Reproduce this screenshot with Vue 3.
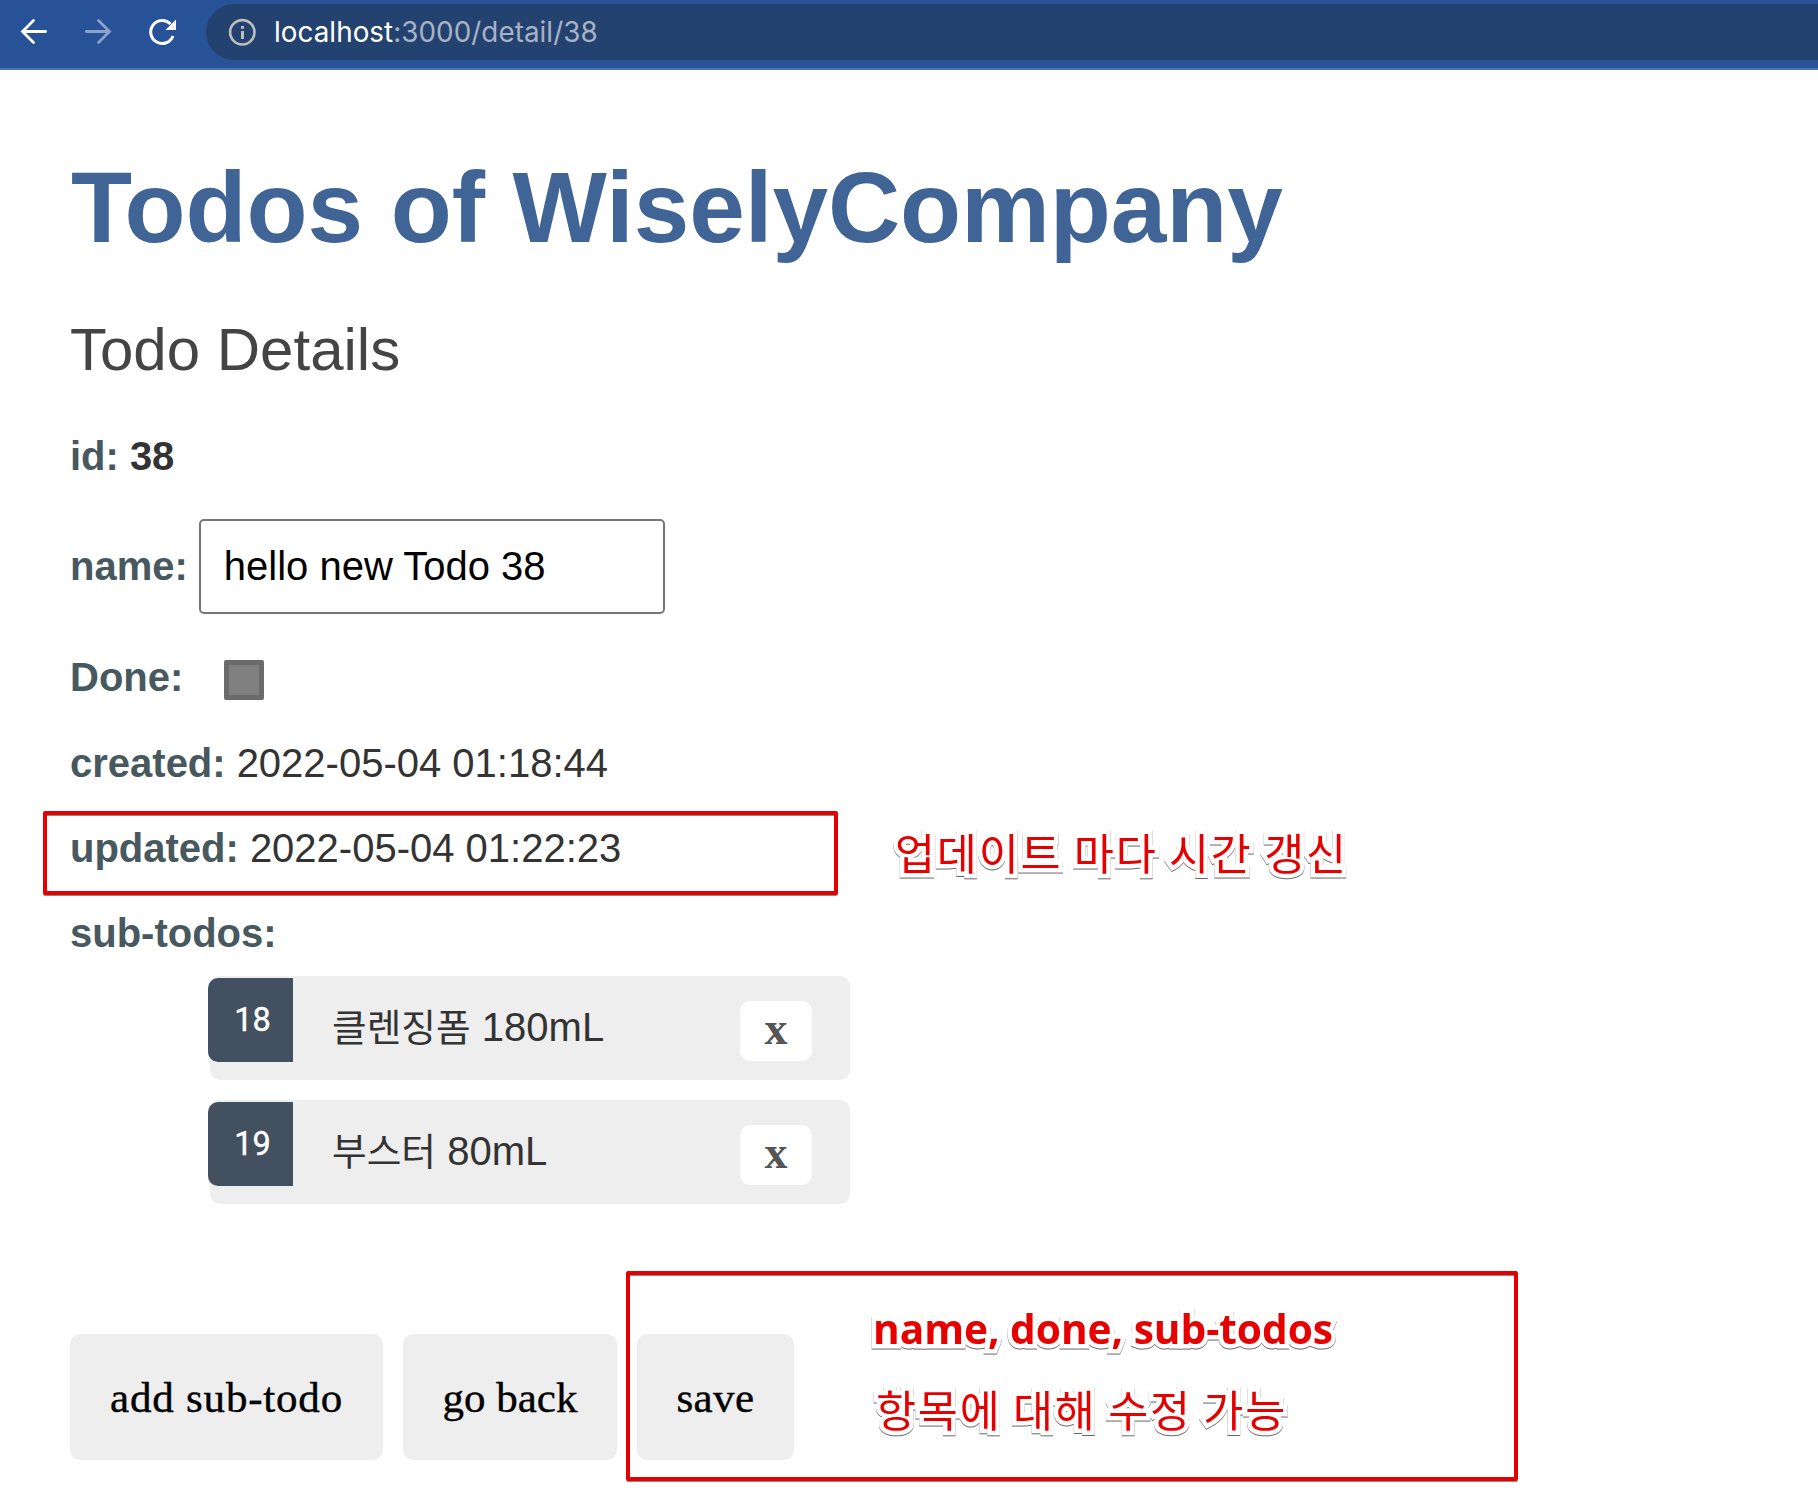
<script setup>
import { ref } from 'vue'

const todo = ref({
  id: 38,
  name: 'hello new Todo 38',
  created: '2022-05-04 01:18:44',
  updated: '2022-05-04 01:22:23',
})

const subTodos = ref([
  { id: 18, label: '클렌징폼', amount: '180mL' },
  { id: 19, label: '부스터', amount: '80mL' },
])
</script>

<template>
  <div class="page">
    <header class="toolbar">
      <svg class="nav" viewBox="0 0 28 28" width="28" height="28" fill="none" stroke="#fff" stroke-width="2.8" stroke-linecap="round">
        <path d="M25.6 13.500H3M13.500 2.500L2.500 13.500L13.500 24.500" />
      </svg>
      <svg class="nav" viewBox="0 0 28 28" width="28" height="28" fill="none" stroke="#8ba2cb" stroke-width="2.8" stroke-linecap="round">
        <path d="M2.400 13.500H25M14.500 2.500L25.500 13.500L14.500 24.500" />
      </svg>
      <svg class="nav" viewBox="0 0 28 28" width="28" height="28">
        <path d="M25 18A11.500 11.500 0 1 1 22.500 6" fill="none" stroke="#fff" stroke-width="3" />
        <path d="M28 1.500V12H17.500Z" fill="#fff" />
      </svg>
      <div class="address">
        <svg viewBox="0 0 28 28" width="28" height="28" fill="none" stroke="#bdbdbd">
          <circle cx="14.300" cy="14.300" r="12.200" stroke-width="2.600" />
          <path d="M14.500 13V21M14.500 8V10.700" stroke-width="3" />
        </svg>
        <span class="url"><b>localhost</b>:3000/detail/38</span>
      </div>
    </header>

    <main>
      <h1>Todos of WiselyCompany</h1>
      <h2>Todo Details</h2>

      <div class="row id"><label>id:</label><strong>{{ todo.id }}</strong></div>
      <div class="row name"><label>name:</label><input v-model="todo.name" type="text" /></div>
      <div class="row done"><label>Done:</label><span class="check"></span></div>
      <div class="row"><label>created:</label><span>{{ todo.created }}</span></div>
      <div class="row"><label>updated:</label><span>{{ todo.updated }}</span></div>
      <div class="row"><label>sub-todos:</label></div>

      <ul>
        <li v-for="item in subTodos" :key="item.id">
          <span class="badge">{{ item.id }}</span>
          <span class="text"><span class="ko">{{ item.label }}</span> {{ item.amount }}</span>
          <button class="remove">x</button>
        </li>
      </ul>

      <div class="actions">
        <button class="add">add sub-todo</button>
        <button class="back">go back</button>
        <button class="save">save</button>
      </div>
    </main>

    <div class="frame frame-updated"></div>
    <div class="frame frame-save"></div>
    <div class="note note-updated">업데이트 마다 시간 갱신</div>
    <div class="note note-fields">name, done, sub-todos</div>
    <div class="note note-edit">항목에 대해 수정 가능</div>
  </div>
</template>

<style>
body {
  margin: 0;
  background: #fff;
}
</style>

<style scoped>
.page {
  position: relative;
  width: 1818px;
  height: 1500px;
  overflow: hidden;
  background: #fff;
  font-family: "Liberation Sans", "Noto Sans CJK KR", sans-serif;
  color: #333;
}
* {
  box-sizing: border-box;
}
.toolbar {
  display: flex;
  height: 70px;
  padding: 4px 0 0 20px;
  background: #275297;
  border-bottom: 2px solid #4a74b1;
}
.nav {
  flex: none;
  margin: 14px 36px 0 0;
}
.nav:nth-child(3) {
  margin-right: 30px;
}
.address {
  flex: 1;
  display: flex;
  align-items: center;
  height: 56px;
  padding-left: 22px;
  border-radius: 28px 0 0 28px;
  background: #24426f;
}
.url {
  margin-left: 18px;
  font: 27.8px/56px Inter, sans-serif;
  letter-spacing: 0.05px;
  color: #a7b3c5;
}
.url b {
  font-weight: 400;
  color: #fff;
}
main {
  padding: 77px 70px 0;
}
h1 {
  margin: 0 0 0 1px;
  font-size: 100px;
  line-height: 120px;
  letter-spacing: -0.1px;
  font-weight: 700;
  color: #406495;
  white-space: nowrap;
}
h2 {
  margin: 48px 0 31px;
  font-size: 60px;
  line-height: 70px;
  font-weight: 400;
  color: #444;
}
.row {
  display: flex;
  align-items: center;
  height: 85px;
  font-size: 40px;
}
.row label {
  margin-right: 11px;
  font-weight: 700;
  color: #47585f;
}
.row.id {
  height: 80px;
}
.row.name {
  height: 95px;
  margin: 23px 0;
}
.row.done {
  height: 80px;
  margin-bottom: 4px;
}
input {
  width: 466px;
  height: 95px;
  padding: 0 23px;
  border: 2px solid #767676;
  border-radius: 5px;
  font: 40px "Liberation Sans", sans-serif;
  color: #000;
}
.check {
  width: 40px;
  height: 40px;
  margin: 6px 0 0 30px;
  border: 5px solid #6a6a6a;
  border-radius: 2px;
  background: #808080;
}
ul {
  margin: 0;
  padding: 0 0 0 140px;
  list-style: none;
}
li {
  display: flex;
  align-items: flex-start;
  width: 640px;
  height: 104px;
  margin-bottom: 20px;
  border-radius: 10px;
  background: #eee;
}
.badge {
  width: 85px;
  height: 84px;
  margin: 2px 0 0 -2px;
  padding-left: 4px;
  border-radius: 10px 0 0 10px;
  background: #435060;
  color: #fff;
  font-family: Roboto, sans-serif;
  font-size: 32.5px;
  line-height: 85px;
  text-align: center;
  -webkit-text-stroke: 0.4px #fff;
}
.text {
  flex: 1;
  padding-left: 39px;
  font-size: 40px;
  line-height: 102px;
  white-space: nowrap;
}
.ko {
  font-family: "Noto Sans CJK KR", sans-serif;
  font-size: 37.7px;
  line-height: 1;
}
button {
  border: 0;
  padding: 0;
  border-radius: 10px;
  background: #eee;
  font-family: Georgia, "Liberation Serif", serif;
}
.remove {
  width: 72px;
  height: 60px;
  margin: 25px 38px 0 0;
  padding-bottom: 4px;
  background: #fff;
  color: #555;
  font-size: 46px;
  font-weight: 700;
  line-height: 52px;
}
.actions {
  display: flex;
  gap: 20px;
  margin-top: 130px;
}
.actions button {
  height: 126px;
  font-size: 43px;
  letter-spacing: 0.8px;
  color: #000;
  -webkit-text-stroke: 0.4px #000;
}
.actions .add {
  width: 313px;
}
.actions .back {
  width: 214px;
  letter-spacing: 0;
}
.actions .save {
  width: 157px;
  letter-spacing: 0.4px;
}
.frame {
  position: absolute;
  border: 4px solid #e60000;
  border-radius: 2px;
  box-shadow: 0 1px 0 #8a8a8a, inset 0 1px 0 #8a8a8a;
}
.frame-updated {
  left: 43px;
  top: 811px;
  width: 795px;
  height: 84px;
}
.frame-save {
  left: 626px;
  top: 1271px;
  width: 892px;
  height: 210px;
}
.note {
  position: absolute;
  font-family: "Noto Sans CJK KR", sans-serif;
  font-size: 43.5px;
  line-height: 60px;
  letter-spacing: 1.8px;
  color: #e60000;
  white-space: nowrap;
  -webkit-text-stroke: 9px #fff;
  paint-order: stroke fill;
  stroke-linejoin: round;
  filter: drop-shadow(0 1px 0.6px rgba(0, 0, 0, 0.6));
}
.note-updated {
  left: 895px;
  top: 822px;
}
.note-fields {
  left: 873px;
  top: 1299px;
  font-family: "Open Sans", sans-serif;
  font-size: 40.6px;
  font-weight: 700;
  letter-spacing: 0;
}
.note-edit {
  left: 876px;
  top: 1379px;
}
</style>
